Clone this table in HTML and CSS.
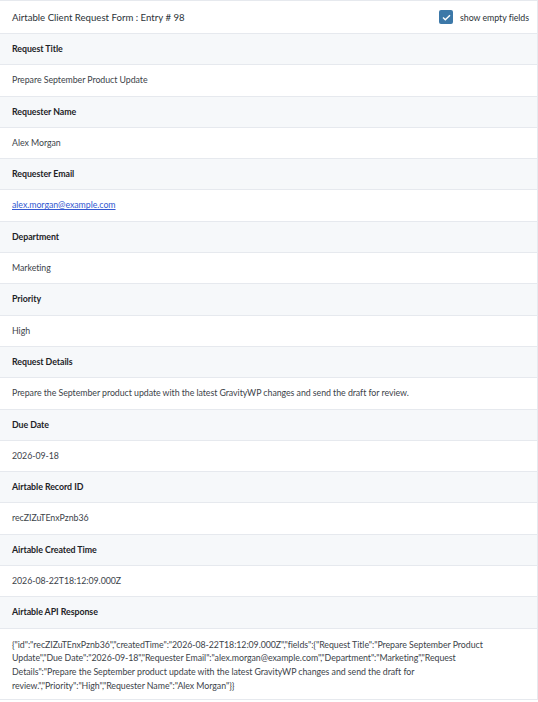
FILE: index.html
```html
<!DOCTYPE html>
<html>
<head>
<meta charset="utf-8">
<link rel="stylesheet" href="styles.css">
</head>
<body>
<div class="entry">
  <div class="head">
    <div class="title">Airtable Client Request Form : Entry # 98</div>
    <label class="toggle">
      <span class="box"><svg width="9" height="7" viewBox="0 0 9 7"><path d="M1 3.6 L3.3 5.8 L8 1.2" fill="none" stroke="#fff" stroke-width="1.4"/></svg></span>
      <span>show empty fields</span>
    </label>
  </div>
  <div class="label">Request Title</div>
  <div class="value">Prepare September Product Update</div>
  <div class="label">Requester Name</div>
  <div class="value">Alex Morgan</div>
  <div class="label">Requester Email</div>
  <div class="value"><a href="#">alex.morgan@example.com</a></div>
  <div class="label">Department</div>
  <div class="value">Marketing</div>
  <div class="label">Priority</div>
  <div class="value">High</div>
  <div class="label">Request Details</div>
  <div class="value">Prepare the September product update with the latest GravityWP changes and send the draft for review.</div>
  <div class="label">Due Date</div>
  <div class="value">2026-09-18</div>
  <div class="label">Airtable Record ID</div>
  <div class="value">recZIZuTEnxPznb36</div>
  <div class="label">Airtable Created Time</div>
  <div class="value">2026-08-22T18:12:09.000Z</div>
  <div class="label">Airtable API Response</div>
  <div class="value json">{"id":"recZIZuTEnxPznb36","createdTime":"2026-08-22T18:12:09.000Z","fields":{"Request Title":"Prepare September Product Update","Due Date":"2026-09-18","Requester Email":"alex.morgan@example.com","Department":"Marketing","Request Details":"Prepare the September product update with the latest GravityWP changes and send the draft for review.","Priority":"High","Requester Name":"Alex Morgan"}}</div>
</div>
</body>
</html>
```
FILE: styles.css
```css
html, body {
  margin: 0;
  padding: 0;
  background: #fff;
}
body {
  font-family: Lato, "Open Sans", sans-serif;
  font-size: 8.8px;
  letter-spacing: -0.05px;
  color: #3c434a;
}
.entry {
  width: 537px;
  border-top: 1px solid #e6e9ee;
  border-right: 1px solid #e6e9ee;
}
.head {
  display: flex;
  align-items: center;
  justify-content: space-between;
  height: 32px;
  padding: 0 8px 0 12px;
  border-bottom: 1px solid #e6e9ee;
  color: #2c3338;
}
.title {
  font-size: 9.6px;
  letter-spacing: 0;
}
.toggle {
  display: flex;
  align-items: center;
  gap: 7px;
  font-size: 8.8px;
  color: #2c3338;
}
.box {
  width: 14px;
  height: 14px;
  border-radius: 2px;
  background: #3c78a8;
  display: flex;
  align-items: center;
  justify-content: center;
}
.label, .value {
  padding: 7px 12px;
  line-height: 16.3px;
  border-bottom: 1px solid #e6e9ee;
}
.label {
  background: #f6f8fa;
  font-weight: 700;
  color: #1d2327;
}
.value a {
  color: #3459d1;
}
.json {
  line-height: 13.7px;
  padding: 9px 40px 7px 12px;
}
```
